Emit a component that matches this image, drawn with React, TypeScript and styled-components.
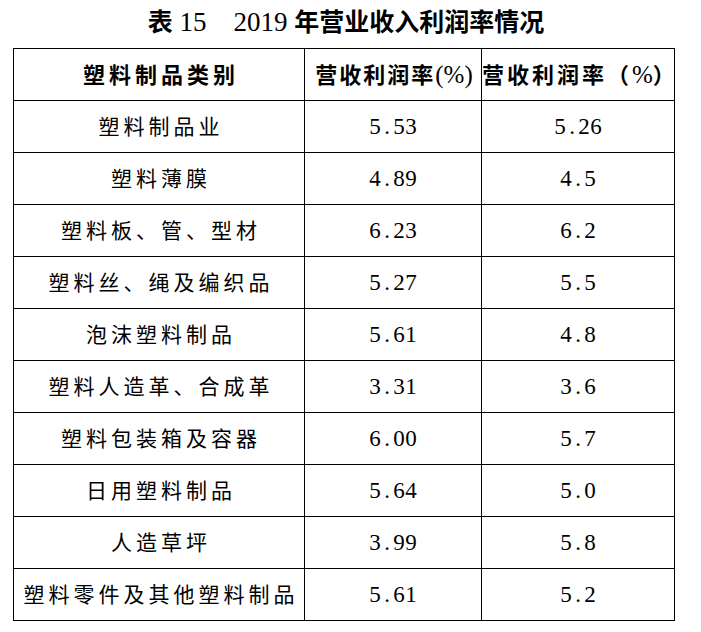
import React from "react";
import styled, { createGlobalStyle } from "styled-components";

const GlobalStyle = createGlobalStyle`
  html, body { margin: 0; padding: 0; background: #fff; }
  body { font-family: "Liberation Serif", "Noto Sans CJK SC", serif; color: #000; }
`;

const Page = styled.div`
  width: 701px;
  height: 632px;
  padding-left: 13px;
  box-sizing: border-box;
`;

const Title = styled.div`
  width: 666px;
  height: 48px;
  display: flex;
  align-items: center;
  justify-content: center;
  font-family: "Liberation Serif", "Noto Sans CJK SC", serif;
  font-size: 25px;
  font-weight: 700;
  line-height: 1;
  white-space: pre;
  padding-bottom: 4px;
  box-sizing: border-box;
`;

const TitleNum = styled.span`
  font-weight: 400;
  font-size: 27px;
`;

const Table = styled.table`
  border-collapse: collapse;
  table-layout: fixed;
  width: 659px;
`;

const Cell = styled.td<{ $width?: number }>`
  border: 1px solid #000;
  height: 51px;
  padding: 0;
  text-align: center;
  vertical-align: middle;
  width: ${(p) => (p.$width ? `${p.$width}px` : "auto")};
  white-space: nowrap;
`;

const Label = styled.span<{ $spacing?: number; $head?: boolean }>`
  font-family: "Noto Sans CJK SC", sans-serif;
  font-size: ${(p) => (p.$head ? 22 : 21)}px;
  font-weight: ${(p) => (p.$head ? 700 : 400)};
  letter-spacing: ${(p) => p.$spacing ?? 4}px;
  margin-right: ${(p) => -(p.$spacing ?? 4)}px;
  display: inline-block;
  line-height: 1;
`;

const Serif = styled.span`
  font-family: "Liberation Serif", serif;
  font-size: 25px;
  font-weight: 400;
  letter-spacing: 0;
`;

const Num = styled.span`
  display: inline-flex;
  font-family: "Liberation Serif", serif;
  font-size: 23px;
  line-height: 1;
`;

const Glyph = styled.span`
  display: inline-block;
  width: 12px;
  text-align: center;
`;

const Figure = ({ value }: { value: string }) => (
  <Num>
    {value.split("").map((c, i) => (
      <Glyph key={i}>{c}</Glyph>
    ))}
  </Num>
);

const rows: [string, string, string][] = [
  ["塑料制品业", "5.53", "5.26"],
  ["塑料薄膜", "4.89", "4.5"],
  ["塑料板、管、型材", "6.23", "6.2"],
  ["塑料丝、绳及编织品", "5.27", "5.5"],
  ["泡沫塑料制品", "5.61", "4.8"],
  ["塑料人造革、合成革", "3.31", "3.6"],
  ["塑料包装箱及容器", "6.00", "5.7"],
  ["日用塑料制品", "5.64", "5.0"],
  ["人造草坪", "3.99", "5.8"],
  ["塑料零件及其他塑料制品", "5.61", "5.2"],
];

export default function App() {
  return (
    <Page>
      <GlobalStyle />
      <Title>
        表<TitleNum> 15　2019 </TitleNum>年营业收入利润率情况
      </Title>
      <Table>
        <tbody>
          <tr>
            <Cell $width={290}>
              <Label $head $spacing={4}>塑料制品类别</Label>
            </Cell>
            <Cell $width={176}>
              <Label $head $spacing={2}>
                营收利润率<Serif>(%)</Serif>
              </Label>
            </Cell>
            <Cell $width={192}>
              <Label $head $spacing={3}>
                营收利润率（<Serif>%</Serif>）
              </Label>
            </Cell>
          </tr>
          {rows.map(([name, a, b]) => (
            <tr key={name}>
              <Cell>
                <Label $spacing={4}>{name}</Label>
              </Cell>
              <Cell>
                <Figure value={a} />
              </Cell>
              <Cell>
                <Figure value={b} />
              </Cell>
            </tr>
          ))}
        </tbody>
      </Table>
    </Page>
  );
}
